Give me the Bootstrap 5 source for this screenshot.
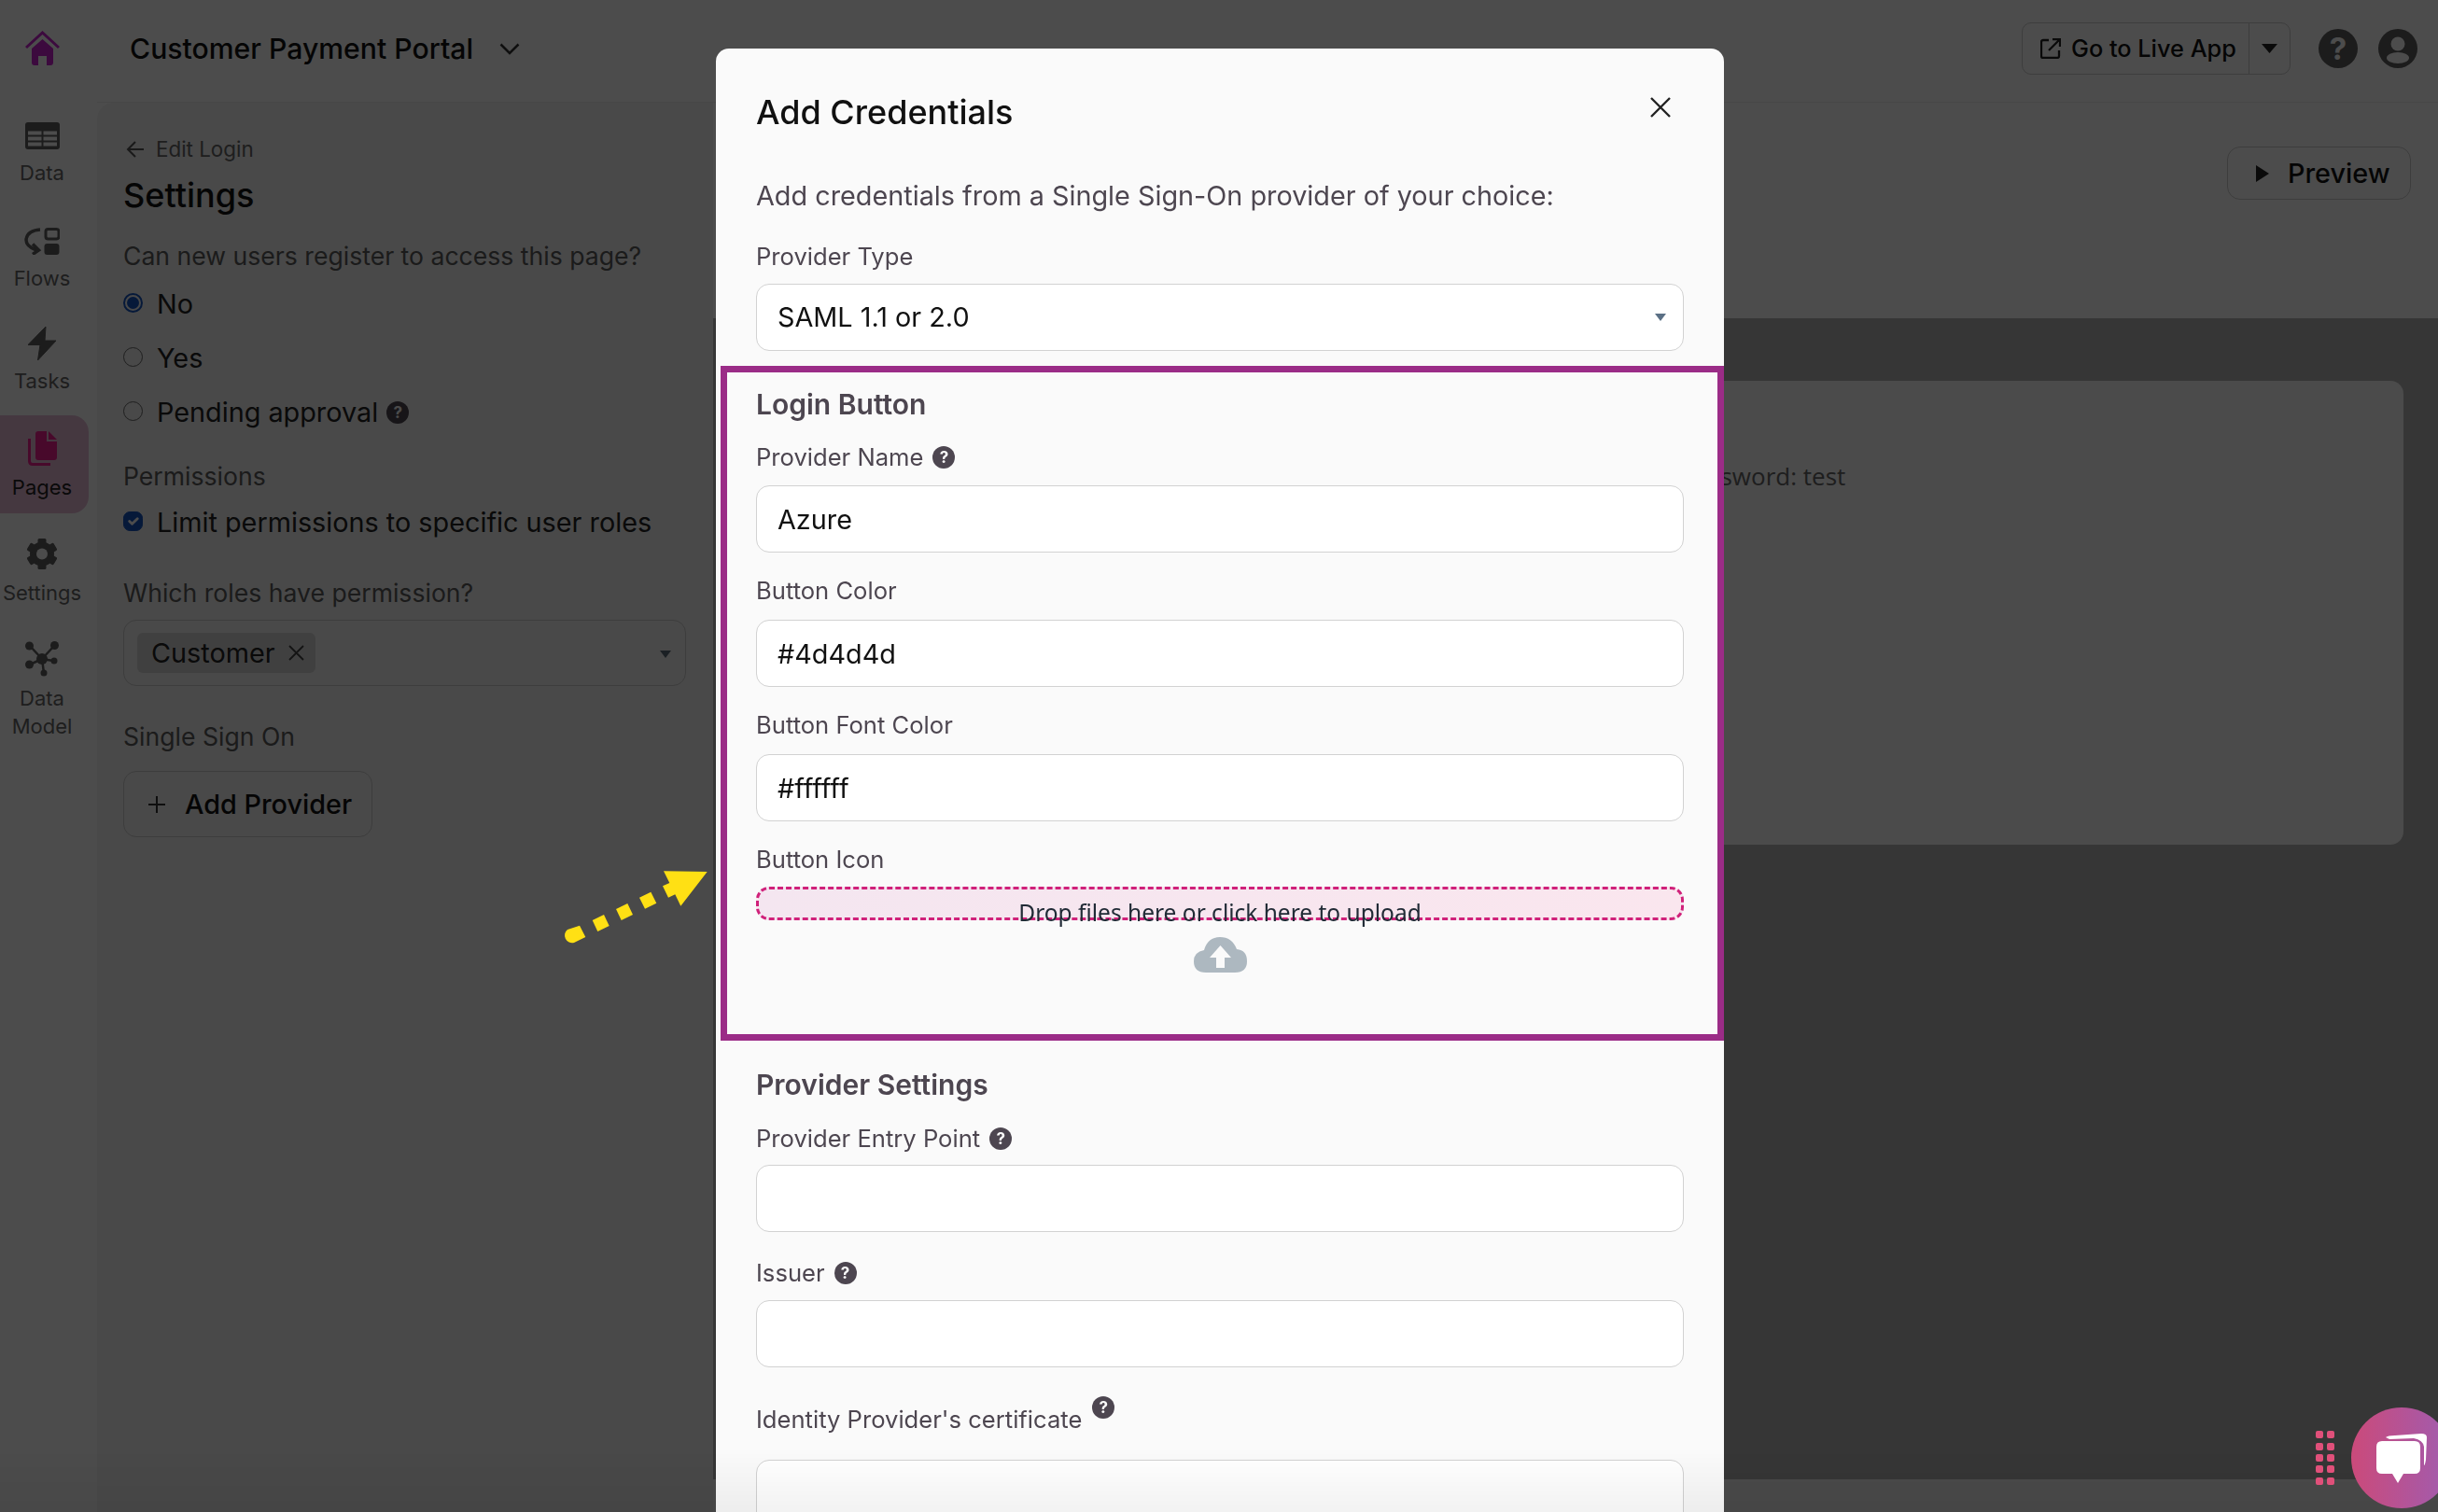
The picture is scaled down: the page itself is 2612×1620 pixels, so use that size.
<!DOCTYPE html>
<html lang="en">
<head>
<meta charset="utf-8">
<title>Add Credentials</title>
<link href="https://cdn.jsdelivr.net/npm/bootstrap@5.3.0/dist/css/bootstrap.min.css" rel="stylesheet">
<style>
html,body{width:2612px;height:1620px;overflow:hidden;}
body{font-family:Inter,"Liberation Sans",sans-serif;background:#fff;color:#3a3a3a;}
.app-root{width:2612px;height:1620px;}
.side-rail{width:104px;flex:none;text-align:center;color:#666;font-size:22px;line-height:30px;}
.side-rail svg{display:block;margin:0 auto;}
.sn-item{width:90px;}
.sn-home{margin-top:33px}.sn-data{margin-top:61px}.sn-flows{margin-top:44px}.sn-tasks{margin-top:37px}
.sn-pages{width:95px;margin-top:22px;padding:17px 5px 13px 0;background:#e8bcd8;border-radius:0 18px 18px 0;color:#222;}
.sn-settings{margin-top:27px}.sn-model{margin-top:37px}
.gap10{margin-top:10px}.gap8{margin-top:8px}.gap7{margin-top:7px}
.top-bar{height:110px;border-bottom:1px solid #eee;padding:0 22px 5px 35px;}
.app-title{font-size:30.2px;font-weight:500;color:#111;margin:0;}
.top-btn{--bs-btn-border-color:#ccc;--bs-btn-color:#111;font-size:25.300px;font-weight:500;height:56px;padding:0 0 0 19px;width:244px;display:flex;align-items:center;gap:11px;border-radius:10px;white-space:nowrap;}
.top-caret{width:45px;padding:0;justify-content:center;}
.round-ico{display:block;}
.ico-gap-a{margin-left:30px;}
.ico-gap-b{margin-left:22px;}
.chev{margin-left:28px;}
.set-panel{width:660px;flex:none;background:#f4f4f4;border-top-left-radius:18px;padding:35px 29px 0 28px;color:#5c5c5c;font-size:26.6px;}
.crumb{font-size:22.4px;line-height:30px;display:flex;align-items:center;gap:12px;margin-left:3px;color:#666;}
.panel-title{font-size:36px;font-weight:500;line-height:44px;color:#111;margin:12px 0 26px;}
.plabel{line-height:34px;margin:0;}
.pcheck{min-height:0;padding-left:36px;margin:0;font-size:28.800px;line-height:36px;color:#222;display:block;}
.pcheck .form-check-input{width:21px;height:21px;margin-left:-36px;margin-top:6px;border-color:#666;background-color:transparent;}
.pcheck .form-check-input[type=radio]:checked{background-image:none;background-color:#1454c0;border:2px solid #1454c0;padding:2px;background-clip:content-box;}
.pcheck .form-check-input[type=checkbox]:checked{background-color:#1454c0;border-color:#1454c0;}
.pcheck .help-dot{position:relative;top:-4px;margin-left:1px;}
.r1{margin-top:17px}.r2,.r3{margin-top:22px}
.mt-perm{margin-top:33px}.mt-limit{margin-top:15px}.mt-which{margin-top:40px}.mt-sso{margin-top:37px}
.role-box{height:71px;margin-top:12px;border:1px solid #ccc;border-radius:14px;padding:0 14px;position:relative;display:flex;align-items:center;}
.role-tag{height:43px;width:191px;background:#d8d8d8;border-radius:6px;font-size:28.800px;color:#222;padding-left:15px;display:flex;align-items:center;gap:14px;}
.caret-a{position:absolute;right:15px;top:32px;width:0;height:0;border:6.500px solid transparent;border-top:8px solid #5b6b7b;border-bottom:0;}
.add-btn{--bs-btn-border-color:#ccc;--bs-btn-color:#111;margin-top:20px;width:267px;height:71px;font-size:28.800px;font-weight:500;border-radius:14px;padding:0 0 0 26px;display:flex;align-items:center;gap:21px;}
.right-col{min-width:0;}
.tool-row{height:231px;padding:47px 29px 0 0;background:#fff;}
.prev-btn{--bs-btn-border-color:#ccc;--bs-btn-color:#111;width:197px;height:57px;font-size:28.800px;font-weight:500;border-radius:14px;padding:0 0 0 30px;display:flex;align-items:center;gap:20px;}
.canvas-area{flex:1;background:#b4b4b4;padding:67px 37px 0 36px;}
.live-card{height:497px;background:#fafafa;border:0;border-radius:14px;font-family:"Open Sans",sans-serif;font-size:26px;color:#666;padding:83px 0 0 796px;}
.foot-band{height:35px;background:#f8f8f8;}
.modal-backdrop{--bs-backdrop-opacity:.7;z-index:10;}
.modal{z-index:20;overflow:hidden !important;}
.cred-dialog{max-width:1080px;width:1080px;margin:52px 0 0 767px;}
.cred-content{background:#fafafa;border:0;border-radius:14px;--bs-modal-border-radius:14px;}
.cred-head{padding:48px 44px 0 43px;position:relative;border:0;display:block;}
.cred-title{font-size:36px;font-weight:500;line-height:40px;color:#111;margin:0;}
.cred-close{position:absolute;right:56px;top:49px;width:24px;height:24px;padding:0;border:0;background:none;display:block;}
.cred-body{padding:50px 43px 0 43px;color:#4d4650;font-size:25.600px;}
.cred-desc{font-size:28.800px;line-height:40px;margin:0 0 30px;}
.fld-label{display:flex;align-items:center;gap:10px;line-height:30px;margin:0 0 14px;font-size:25.600px;}
.fld-input{height:72px;border:1px solid #d2d2d2;border-radius:14px;font-size:28.800px;padding:0 22px;color:#111;background-color:#fff;box-shadow:none;}
select.fld-input{background-image:url("data:image/svg+xml,%3Csvg xmlns='http://www.w3.org/2000/svg' viewBox='0 0 12 8'%3E%3Cpath fill='%235b7085' d='M0 0h12L6 8z'/%3E%3C/svg%3E");background-size:12px 8px;background-position:right 18px center;}
.login-box{margin:16px -43px 0 -38px;padding:17px 36px 7px 31px;border:7px solid #9b2c87;}
.login-box .fld-label{margin-bottom:16px;}
.login-box .fgrp .fld-label{margin-bottom:15px;}
.login-box .lab-zone{margin-bottom:14px;}
.sec-head{font-size:30px;font-weight:600;line-height:34px;margin:0;color:#4d4650;}
.fgrp{margin-top:25px;}
.fgrp-b{margin-top:29px;}
.cred-body>.fgrp{margin-top:26px;}
.cred-body>.fgrp .fld-label{margin-bottom:13px;}
.login-box .fgrp-b{margin-top:26px;}
.help-dot{width:24px;height:24px;border-radius:50%;background:#4d4650;color:#fafafa;font-size:17px;font-weight:700;line-height:24px;text-align:center;display:inline-block;flex:none;}
.drop-zone{height:36px;border:3px dashed #d0217a;border-radius:14px;background:linear-gradient(90deg,#f4e6f0,#fae6ee);text-align:center;font-family:"Noto Sans",sans-serif;font-size:24.500px;line-height:34px;color:#212b36;padding-top:8px;margin-bottom:115px;}
.drop-zone svg{display:block;margin:9px auto 0;}
.sec2{margin:30px 0 0;}
.lab-rise{gap:11px;}
.lab-rise .help-dot{position:relative;top:-13px;}
.lab-mt{margin-top:41px;margin-bottom:28px;}
.point-arrow{position:absolute;left:590px;top:920px;z-index:30;}
.chat-wrap{position:absolute;right:-15px;bottom:4px;z-index:30;display:flex;align-items:center;gap:18px;}
.chat-dots{display:grid;grid-template-columns:8px 8px;gap:4.300px 4px;}
.chat-dots i{display:block;width:8px;height:8px;background:#e0507a;border-radius:2px;}
.chat-ball{width:108px;height:108px;border-radius:50%;background:linear-gradient(90deg,#cb4a7a,#a05cb0);display:flex;align-items:center;justify-content:center;}
.bottom-fade{position:absolute;left:0;right:0;bottom:0;height:65px;z-index:25;background:linear-gradient(rgba(0,0,0,0),rgba(0,0,0,.05));pointer-events:none;}
</style>
</head>
<body>
<div class="app-root d-flex">
  <nav class="side-rail">
    <div class="sn-item sn-home">
      <svg width="37" height="37" viewBox="0 0 37 37"><path d="M1 18 18.500 2 36 18" fill="none" stroke="#c822cf" stroke-width="3"/><path d="M7 19 18.500 9 30 19v15q0 3-3 3h-4V27h-9v10h-4q-3 0-3-3z" fill="#c822cf"/></svg>
    </div>
    <div class="sn-item sn-data">
      <svg width="37" height="29" viewBox="0 0 37 29"><rect width="37" height="29" rx="3" fill="#5e5e5e"/><g fill="#fff"><rect x="3" y="9.500" width="14.500" height="4"/><rect x="19.500" y="9.500" width="14.500" height="4"/><rect x="3" y="15.500" width="14.500" height="4"/><rect x="19.500" y="15.500" width="14.500" height="4"/><rect x="3" y="21.500" width="14.500" height="4"/><rect x="19.500" y="21.500" width="14.500" height="4"/></g></svg>
      <div class="gap10">Data</div>
    </div>
    <div class="sn-item sn-flows">
      <svg width="38" height="29" viewBox="0 0 38 29"><path d="M17 2Q3 3 2 13q0 7 11 11" fill="none" stroke="#5e5e5e" stroke-width="3.500"/><path d="M9 17.500 15.500 24 9 28.500" fill="none" stroke="#5e5e5e" stroke-width="3.500"/><rect x="23" y="1.500" width="14" height="10.500" rx="2.500" fill="none" stroke="#5e5e5e" stroke-width="3"/><rect x="21.500" y="17" width="16" height="12" rx="3" fill="#5e5e5e"/></svg>
      <div class="gap10">Flows</div>
    </div>
    <div class="sn-item sn-tasks">
      <svg width="30" height="36" viewBox="0 0 30 36"><path d="M19 0 0 19.500h13L10.500 36 30 15H18z" fill="#5e5e5e" stroke="#5e5e5e" stroke-linejoin="round"/></svg>
      <div class="gap7">Tasks</div>
    </div>
    <div class="sn-item sn-pages">
      <svg width="31" height="37" viewBox="0 0 31 37"><path d="M8 3q0-3 3-3h9v11h11v17q0 3-3 3H11q-3 0-3-3z" fill="#f02090"/><path d="M22 0l9 9h-9z" fill="#f02090"/><path d="M1.500 8v24q0 3.500 3.500 3.500h19" fill="none" stroke="#f02090" stroke-width="3"/></svg>
      <div class="gap8">Pages</div>
    </div>
    <div class="sn-item sn-settings">
      <svg width="32" height="33" viewBox="-16 -16.500 32 33"><circle r="9.500" fill="none" stroke="#5e5e5e" stroke-width="7"/><g fill="#5e5e5e"><rect x="-4.500" y="-16.500" width="9" height="33" rx="1.500"/><rect x="-4.500" y="-16.500" width="9" height="33" rx="1.500" transform="rotate(60)"/><rect x="-4.500" y="-16.500" width="9" height="33" rx="1.500" transform="rotate(120)"/></g><circle r="6" fill="#fff"/></svg>
      <div class="gap10">Settings</div>
    </div>
    <div class="sn-item sn-model">
      <svg width="36" height="38" viewBox="0 0 36 38"><path d="M5 5 18 19 31 5M18 19 5 25M18 19 30 21M18 19 20 34" stroke="#5e5e5e" stroke-width="2.500" fill="none"/><g fill="#5e5e5e"><circle cx="18" cy="19" r="6"/><circle cx="4.500" cy="5" r="4.500"/><circle cx="31.500" cy="4.500" r="4.500"/><circle cx="4.500" cy="25" r="4.500"/><circle cx="31" cy="21" r="3.500"/><circle cx="20" cy="34" r="3.500"/></g></svg>
      <div class="gap8">Data<br>Model</div>
    </div>
  </nav>
  <div class="flex-grow-1 d-flex flex-column right-col">
    <header class="top-bar d-flex align-items-center">
      <h1 class="app-title">Customer Payment Portal</h1>
      <svg class="chev me-auto" width="22" height="13" viewBox="0 0 22 13"><path d="M1.500 1.500 11 11l9.500-9.500" fill="none" stroke="#333" stroke-width="2.500"/></svg>
      <div class="btn-group">
        <button class="btn top-btn" type="button"><svg width="22" height="22" viewBox="0 0 22 22"><path d="M9 2H3Q1 2 1 4v15q0 2 2 2h15q2 0 2-2v-6M13 1h8v8M21 1 9 13" fill="none" stroke="#222" stroke-width="2.300"/></svg>Go to Live App</button>
        <button class="btn top-btn top-caret" type="button" aria-label="More"><svg width="17" height="10" viewBox="0 0 17 10"><path d="M0 0h17L8.500 10z" fill="#222"/></svg></button>
      </div>
      <svg class="round-ico ico-gap-a" width="42" height="42" viewBox="0 0 42 42"><circle cx="21" cy="21" r="21" fill="#5e5e5e"/><text x="21" y="33" text-anchor="middle" font-family="Inter" font-weight="700" font-size="33" fill="#fff">?</text></svg>
      <svg class="round-ico ico-gap-b" width="42" height="42" viewBox="0 0 42 42"><circle cx="21" cy="21" r="21" fill="#5e5e5e"/><circle cx="21" cy="16" r="7.500" fill="#fff"/><ellipse cx="21" cy="31" rx="12" ry="6" fill="#fff"/></svg>
    </header>
    <div class="flex-grow-1 d-flex">
      <section class="set-panel">
        <div class="crumb"><svg width="20" height="20" viewBox="0 0 20 20"><path d="M19 10H2M10 2l-8 8 8 8" fill="none" stroke="#555" stroke-width="2"/></svg>Edit Login</div>
        <h2 class="panel-title">Settings</h2>
        <p class="plabel">Can new users register to access this page?</p>
        <label class="form-check pcheck r1"><input class="form-check-input" type="radio" name="reg" checked>No</label>
        <label class="form-check pcheck r2"><input class="form-check-input" type="radio" name="reg">Yes</label>
        <label class="form-check pcheck r3"><input class="form-check-input" type="radio" name="reg">Pending approval <span class="help-dot">?</span></label>
        <p class="plabel mt-perm">Permissions</p>
        <label class="form-check pcheck mt-limit"><input class="form-check-input" type="checkbox" checked>Limit permissions to specific user roles</label>
        <p class="plabel mt-which">Which roles have permission?</p>
        <div class="role-box"><span class="role-tag">Customer <svg width="17" height="17" viewBox="0 0 17 17"><path d="M1 1l15 15M16 1 1 16" stroke="#444" stroke-width="1.800"/></svg></span><span class="caret-a"></span></div>
        <p class="plabel mt-sso">Single Sign On</p>
        <button class="btn add-btn" type="button"><svg width="18" height="18" viewBox="0 0 18 18"><path d="M9 0v18M0 9h18" stroke="#333" stroke-width="2"/></svg>Add Provider</button>
      </section>
      <div class="flex-grow-1 d-flex flex-column">
        <div class="tool-row d-flex justify-content-end"><button class="btn prev-btn" type="button"><svg width="14" height="18" viewBox="0 0 14 18"><path d="M0 0l14 9L0 18z" fill="#222"/></svg>Preview</button></div>
        <div class="canvas-area"><div class="card live-card d-block">Username: test &nbsp; Password: test</div></div>
        <div class="foot-band"></div>
      </div>
    </div>
  </div>
</div>

<div class="modal-backdrop show"></div>
<div class="modal d-block" tabindex="-1">
  <div class="modal-dialog cred-dialog">
    <div class="modal-content cred-content">
      <div class="modal-header cred-head">
        <h3 class="modal-title cred-title">Add Credentials</h3>
        <button class="cred-close" type="button" aria-label="Close"><svg width="24" height="24" viewBox="0 0 24 24"><path d="M2 2l20 20M22 2 2 22" stroke="#222" stroke-width="2.400"/></svg></button>
      </div>
      <div class="modal-body cred-body">
        <p class="cred-desc">Add credentials from a Single Sign-On provider of your choice:</p>
        <label class="fld-label">Provider Type</label>
        <select class="form-select fld-input"><option>SAML 1.1 or 2.0</option></select>
        <div class="login-box">
          <h4 class="sec-head">Login Button</h4>
          <div class="fgrp"><label class="fld-label">Provider Name <span class="help-dot">?</span></label><input class="form-control fld-input" value="Azure"></div>
          <div class="fgrp-b"><label class="fld-label">Button Color</label><input class="form-control fld-input" value="#4d4d4d"></div>
          <div class="fgrp-b"><label class="fld-label">Button Font Color</label><input class="form-control fld-input" value="#ffffff"></div>
          <div class="fgrp-b"><label class="fld-label lab-zone">Button Icon</label>
            <div class="drop-zone">Drop files here or click here to upload
              <svg width="57" height="38" viewBox="0 0 57 38"><path d="M13 38Q0 38 0 26q0-10 11-12Q15 0 28 0q13 0 18 13 11 1 11 13 0 12-13 12z" fill="#adb8c0"/><path d="M28.500 9 40 22h-7v11h-9V22h-7z" fill="#fafafa"/></svg>
            </div>
          </div>
        </div>
        <h4 class="sec-head sec2">Provider Settings</h4>
        <div class="fgrp"><label class="fld-label">Provider Entry Point <span class="help-dot">?</span></label><input class="form-control fld-input"></div>
        <div class="fgrp-b"><label class="fld-label">Issuer <span class="help-dot">?</span></label><input class="form-control fld-input"></div>
        <label class="fld-label lab-rise lab-mt">Identity Provider's certificate <span class="help-dot">?</span></label>
        <input class="form-control fld-input">
      </div>
    </div>
  </div>
</div>

<svg class="point-arrow" width="170" height="100" viewBox="0 0 170 100"><g fill="#ffe014"><polygon points="121,13.300 167.700,14 139.300,50.700 133.300,38.300 126,41.700 120,29.300 127.300,26"/><polygon points="95,41.700 107.300,35.700 113.300,47.700 101,53.700"/><polygon points="70,54 82.300,48 88,60 75.700,66"/><polygon points="44.700,66 57,60 62.700,72 50.300,78"/><path d="M31 71.700 37.300 84 25 90A8 8 0 0 1 18 76z"/></g></svg>
<div class="bottom-fade"></div>
<div class="chat-wrap">
  <div class="chat-dots"><i></i><i></i><i></i><i></i><i></i><i></i><i></i><i></i><i></i><i></i></div>
  <div class="chat-ball"><svg width="54" height="53" viewBox="0 0 54 53"><path d="M10 4Q12 2 20 2L48 0Q54 0 54 4L53 28Q52 34 51 34V14Q50 7 40 5L14 6z" fill="#fff"/><path d="M6 8H41Q47 8 47 14V37Q47 43 41 43H29L23 53 17 43H6Q0 43 0 37V14Q0 8 6 8z" fill="#fff"/></svg></div>
</div>
</body>
</html>
